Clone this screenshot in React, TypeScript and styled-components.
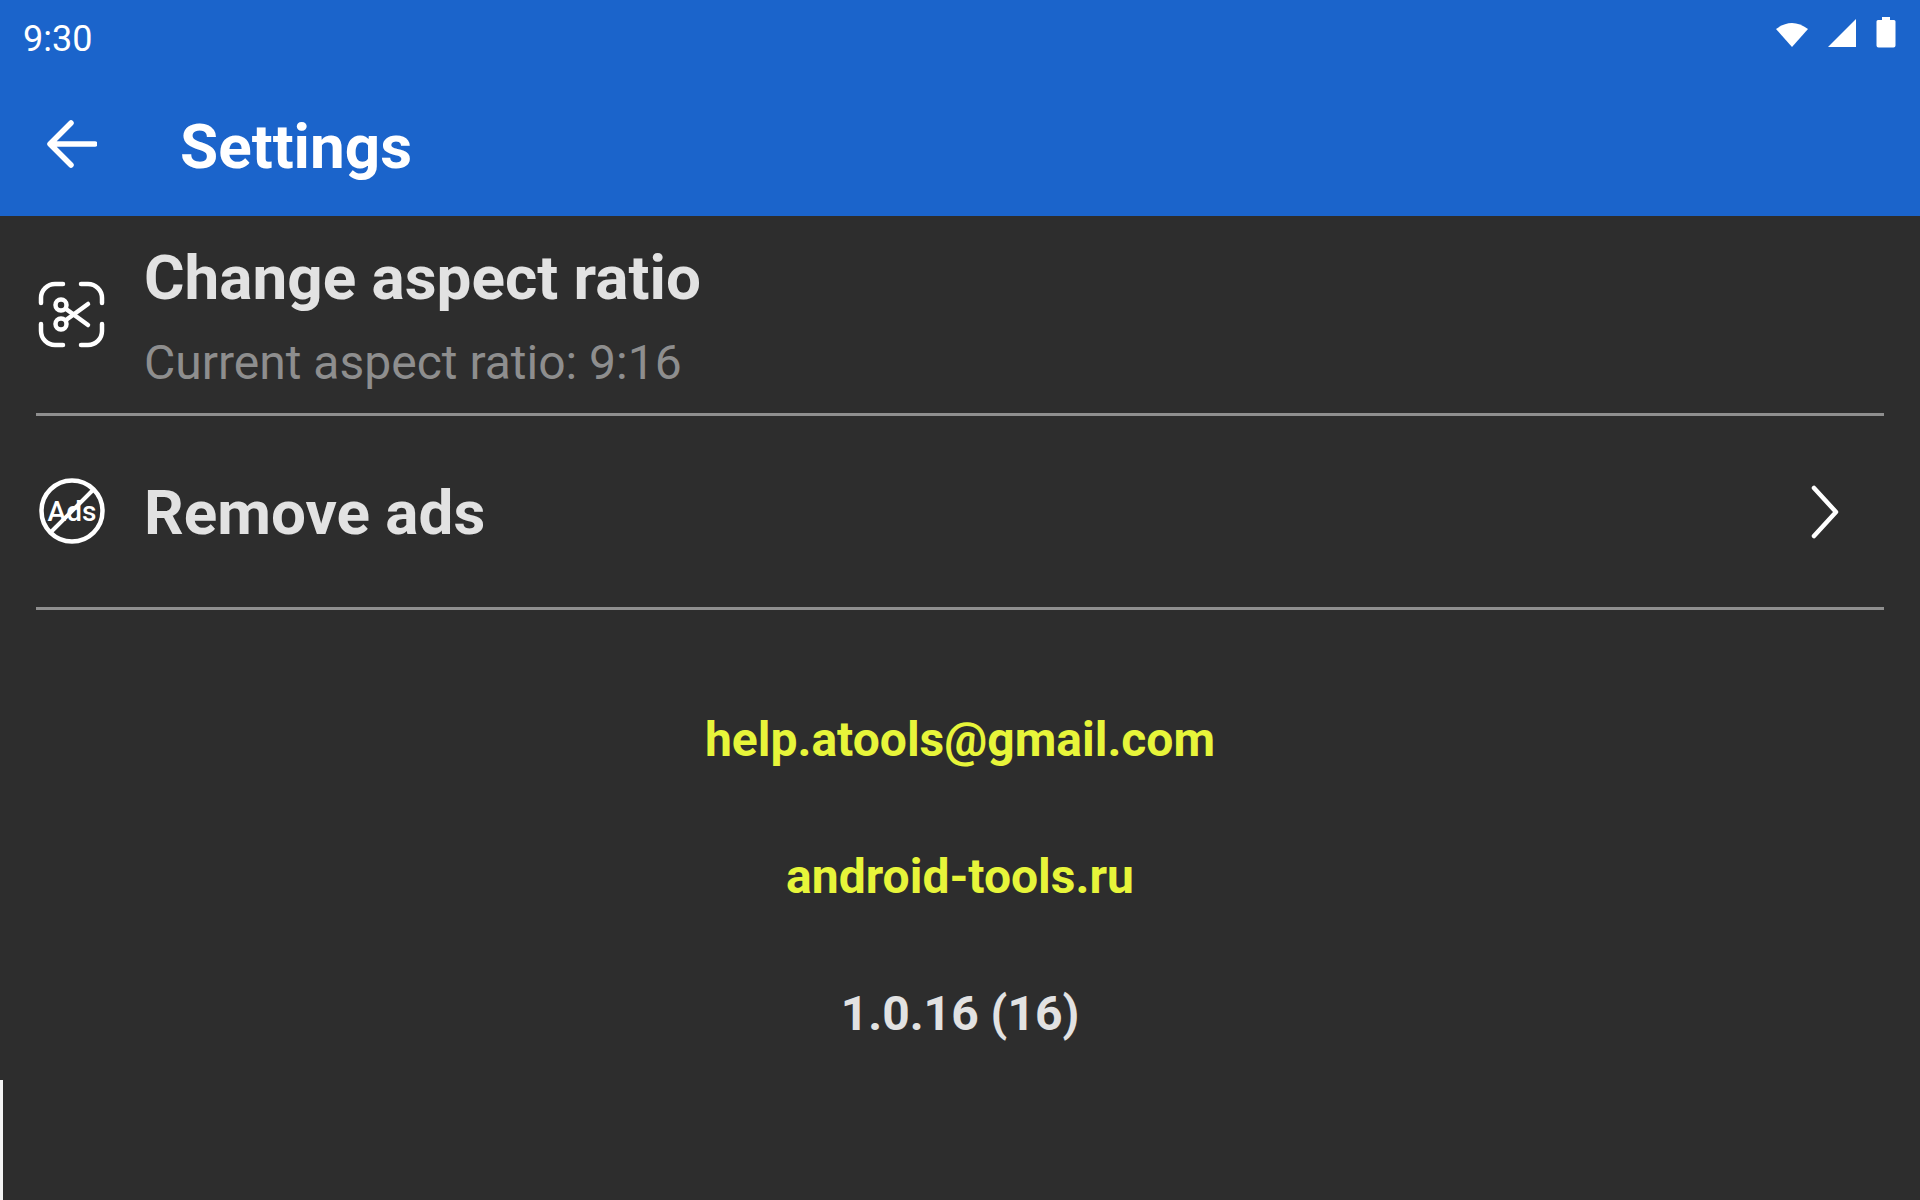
import React from "react";
import styled, { createGlobalStyle } from "styled-components";

const Global = createGlobalStyle`
  html, body { margin: 0; padding: 0; background: #2d2d2d; }
  #root { width: 1920px; height: 1200px; overflow: hidden; }
`;

const Page = styled.div`
  width: 1920px;
  height: 1200px;
  display: flex;
  flex-direction: column;
  background: #2d2d2d;
  font-family: Roboto, "Liberation Sans", sans-serif;
`;

const Header = styled.header`
  height: 216px;
  flex: none;
  background: #1b64cb;
  color: #fff;
  display: flex;
  flex-direction: column;
`;

const StatusBar = styled.div`
  height: 76px;
  display: flex;
  justify-content: space-between;
  padding: 17px 24px 0 23px;
  box-sizing: border-box;
`;

const Clock = styled.span`
  font-size: 36px;
  line-height: 44px;
  font-weight: 400;
`;

const StatusIcons = styled.div`
  display: flex;
  align-items: flex-start;
`;

const WifiIcon = styled.svg`
  width: 32px;
  height: 30px;
  margin-top: 3px;
`;

const SignalIcon = styled.svg`
  width: 30px;
  height: 30px;
  margin-left: 19px;
  margin-top: 1px;
`;

const BatteryIcon = styled.svg`
  width: 20px;
  height: 31px;
  margin-left: 19px;
`;

const Toolbar = styled.div`
  flex: 1;
  display: flex;
  align-items: center;
  padding: 0 0 4px 47px;
`;

const Title = styled.h1`
  margin: 6px 0 0 83px;
  font-size: 62px;
  line-height: 72px;
  font-weight: 700;
`;

const Content = styled.main`
  height: 864px;
  flex: none;
  display: flex;
  flex-direction: column;
  padding: 0 36px;
`;

const Row = styled.div<{ $h: number }>`
  height: ${(p) => p.$h}px;
  flex: none;
  box-sizing: border-box;
  display: flex;
  align-items: center;
  border-bottom: 3px solid #8f8f8f;
`;

const RowIcon = styled.svg`
  width: 72px;
  height: 72px;
  flex: none;
  margin-right: 36px;
`;

const RowText = styled.div`
  flex: 1;
  display: flex;
  flex-direction: column;
`;

const RowTitle = styled.div<{ $shift: number }>`
  font-size: 62px;
  line-height: 70px;
  font-weight: 700;
  color: #e2e2e2;
  margin-top: ${(p) => p.$shift}px;
`;

const RowSub = styled.div`
  font-size: 48px;
  line-height: 58px;
  margin-top: 21px;
  color: #8e8e8e;
`;

const Chevron = styled.svg`
  width: 28px;
  height: 54px;
  margin-right: 45px;
  flex: none;
`;

const Info = styled.div`
  display: flex;
  flex-direction: column;
  align-items: center;
  padding-top: 107px;
  gap: 92px;
`;

const InfoLine = styled.div<{ $accent?: boolean }>`
  font-size: 48px;
  line-height: 45px;
  font-weight: 700;
  color: ${(p) => (p.$accent ? "#e7f53a" : "#e2e2e2")};
`;

const Bottom = styled.div`
  flex: 1;
  display: flex;
`;

const Sliver = styled.div`
  width: 3px;
  background: #f4f4f4;
`;

export default function App() {
  return (
    <Page>
      <Global />
      <Header>
        <StatusBar>
          <Clock>9:30</Clock>
          <StatusIcons>
            <WifiIcon viewBox="0 0 32 30">
              <path d="M0 9 Q16 -3 32 9 L16 27 Z" fill="#fff" />
            </WifiIcon>
            <SignalIcon viewBox="0 0 30 30">
              <path d="M1 29 L29 1 V29 Z" fill="#fff" />
            </SignalIcon>
            <BatteryIcon viewBox="0 0 20 31">
              <path d="M6 0 h8 v3 h4 a1.5 1.5 0 0 1 1.5 1.5 v24 a2 2 0 0 1 -2 2 h-15 a2 2 0 0 1 -2 -2 v-24 a1.5 1.5 0 0 1 1.5 -1.5 h4 Z" fill="#fff" />
            </BatteryIcon>
          </StatusIcons>
        </StatusBar>
        <Toolbar>
          <svg width="50" height="50" viewBox="0 0 50 50" fill="none" stroke="#fff" strokeWidth="5.5" strokeLinecap="round" strokeLinejoin="round">
            <path d="M48 25 H4 M24 4 L3 25 L24 46" />
          </svg>
          <Title>Settings</Title>
        </Toolbar>
      </Header>
      <Content>
        <Row $h={200}>
          <RowIcon viewBox="0 0 72 72" fill="none" stroke="#fff" strokeWidth="4.5" strokeLinecap="round">
            <path d="M27 5 H19 A14 14 0 0 0 5 19 V24" />
            <path d="M45 5 H52 A14 14 0 0 1 66 19 V24" />
            <path d="M5 45 V52 A14 14 0 0 0 19 66 H27" />
            <path d="M66 45 V52 A14 14 0 0 1 52 66 H45" />
            <circle cx="25" cy="26" r="5.5" />
            <circle cx="25" cy="45" r="5.5" />
            <path d="M30 30 L52 46 M30 41 L52 25" />
          </RowIcon>
          <RowText>
            <RowTitle $shift={6}>Change aspect ratio</RowTitle>
            <RowSub>Current aspect ratio: 9:16</RowSub>
          </RowText>
        </Row>
        <Row $h={194}>
          <RowIcon viewBox="0 0 72 72">
            <circle cx="36" cy="35" r="30.5" fill="none" stroke="#fff" strokeWidth="4.5" />
            <text x="36" y="45" textAnchor="middle" fontFamily="Roboto, sans-serif" fontSize="28" fontWeight="500" fill="#fff">Ads</text>
            <path d="M15 56 L57 14" stroke="#fff" strokeWidth="4" />
          </RowIcon>
          <RowText>
            <RowTitle $shift={3}>Remove ads</RowTitle>
          </RowText>
          <Chevron viewBox="0 0 28 54" fill="none" stroke="#fff" strokeWidth="4.5" strokeLinecap="round" strokeLinejoin="round">
            <path d="M3 3 L25 27 L3 51" />
          </Chevron>
        </Row>
        <Info>
          <InfoLine $accent>help.atools@gmail.com</InfoLine>
          <InfoLine $accent>android-tools.ru</InfoLine>
          <InfoLine>1.0.16 (16)</InfoLine>
        </Info>
      </Content>
      <Bottom>
        <Sliver />
      </Bottom>
    </Page>
  );
}
